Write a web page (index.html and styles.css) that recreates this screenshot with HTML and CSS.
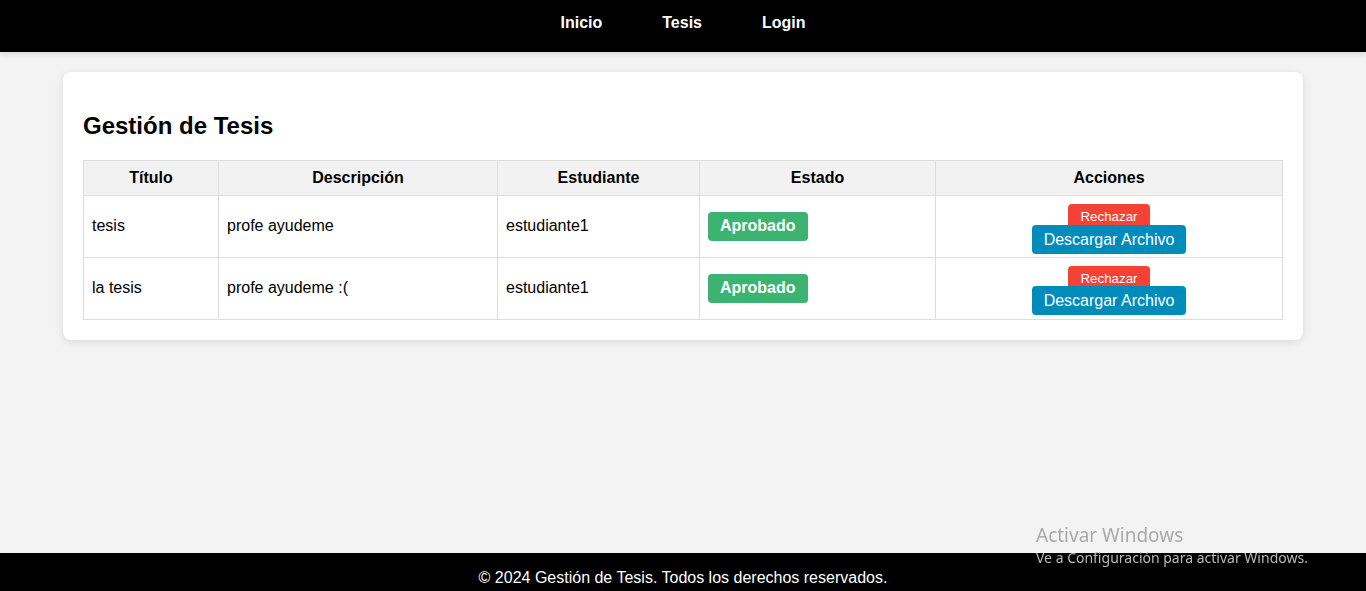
FILE: index.html
```
<!DOCTYPE html>
<html lang="es">
<head>
<meta charset="utf-8">
<title>Gestión de Tesis</title>
<link rel="stylesheet" href="styles.css">
</head>
<body>
<header class="navbar">
  <nav class="nav-links">
    <a href="#">Inicio</a>
    <a href="#">Tesis</a>
    <a href="#">Login</a>
  </nav>
</header>

<main class="container">
  <h2 class="title">Gestión de Tesis</h2>
  <table class="thesis-table">
    <colgroup>
      <col class="c-titulo">
      <col class="c-desc">
      <col class="c-est">
      <col class="c-estado">
      <col class="c-acc">
    </colgroup>
    <thead>
      <tr>
        <th>Título</th>
        <th>Descripción</th>
        <th>Estudiante</th>
        <th>Estado</th>
        <th>Acciones</th>
      </tr>
    </thead>
    <tbody>
      <tr>
        <td>tesis</td>
        <td>profe ayudeme</td>
        <td>estudiante1</td>
        <td><span class="badge">Aprobado</span></td>
        <td class="actions">
          <form class="reject-form"><button type="button" class="btn-reject">Rechazar</button></form>
          <a href="#" class="btn-download">Descargar Archivo</a>
        </td>
      </tr>
      <tr>
        <td>la tesis</td>
        <td>profe ayudeme :(</td>
        <td>estudiante1</td>
        <td><span class="badge">Aprobado</span></td>
        <td class="actions">
          <form class="reject-form"><button type="button" class="btn-reject">Rechazar</button></form>
          <a href="#" class="btn-download">Descargar Archivo</a>
        </td>
      </tr>
    </tbody>
  </table>
</main>

<footer class="footer">© 2024 Gestión de Tesis. Todos los derechos reservados.</footer>

<div class="watermark">
  <div class="wm-title">Activar Windows</div>
  <div class="wm-sub">Ve a Configuración para activar Windows.</div>
</div>
</body>
</html>
```

FILE: styles.css
```
* {
  box-sizing: border-box;
}

html, body {
  margin: 0;
  padding: 0;
}

body {
  background: #f3f3f3;
  font-family: "Liberation Sans", Arial, sans-serif;
  font-size: 16px;
  color: #000;
  min-height: 591px;
}

.navbar {
  position: relative;
  z-index: 2;
  background: #000;
  height: 52px;
  padding-top: 14px;
  box-shadow: 0 2px 6px rgba(0, 0, 0, 0.12);
}

.nav-links {
  display: flex;
  justify-content: center;
  gap: 60px;
}

.nav-links a {
  color: #fff;
  font-weight: bold;
  text-decoration: none;
  line-height: 18.4px;
}

.container {
  width: 1240px;
  margin: 20px auto 0;
  background: #fff;
  border-radius: 8px;
  padding: 20px;
  box-shadow: 0 2px 10px rgba(0, 0, 0, 0.1);
}

.title {
  font-size: 24px;
  font-weight: bold;
  margin: 20px 0 20px;
  line-height: 27.6px;
}

.thesis-table {
  width: 100%;
  border-collapse: collapse;
  table-layout: fixed;
}

.c-titulo { width: 135px; }
.c-desc { width: 279px; }
.c-est { width: 202px; }
.c-estado { width: 236px; }

.thesis-table th,
.thesis-table td {
  border: 1px solid #ddd;
  padding: 8px;
  line-height: 18.4px;
}

.thesis-table th {
  background: #f2f2f2;
  font-weight: bold;
  text-align: center;
}

.thesis-table td {
  text-align: left;
  vertical-align: middle;
}

.badge {
  display: inline-block;
  background: #3cb371;
  color: #fff;
  font-weight: bold;
  padding: 5.5px 12px;
  border-radius: 4px;
}

.thesis-table td.actions {
  text-align: center;
  padding-bottom: 8px;
}

.reject-form {
  margin: 0;
}

.btn-reject {
  display: inline-block;
  font-family: "Liberation Sans", Arial, sans-serif;
  font-size: 13.33px;
  line-height: 16.5px;
  background: #f44336;
  color: #fff;
  border: none;
  border-radius: 4px;
  padding: 5px 12px;
  vertical-align: baseline;
}

.btn-download {
  background: #008cba;
  color: #fff;
  text-decoration: none;
  padding: 6px 12px;
  border-radius: 4px;
  position: relative;
}

.footer {
  position: fixed;
  left: 0;
  right: 0;
  bottom: 0;
  height: 38px;
  background: #000;
  color: #fff;
  text-align: center;
  padding-top: 16px;
  line-height: 18.4px;
}

.watermark {
  position: fixed;
  left: 1036px;
  top: 522px;
  z-index: 5;
  font-family: "Noto Sans", "Open Sans", sans-serif;
  pointer-events: none;
}

.wm-title {
  font-size: 19px;
  line-height: 26px;
  color: #a9a9a9;
}

.wm-sub {
  font-size: 14px;
  line-height: 19px;
  color: #b8b8b8;
}
```
